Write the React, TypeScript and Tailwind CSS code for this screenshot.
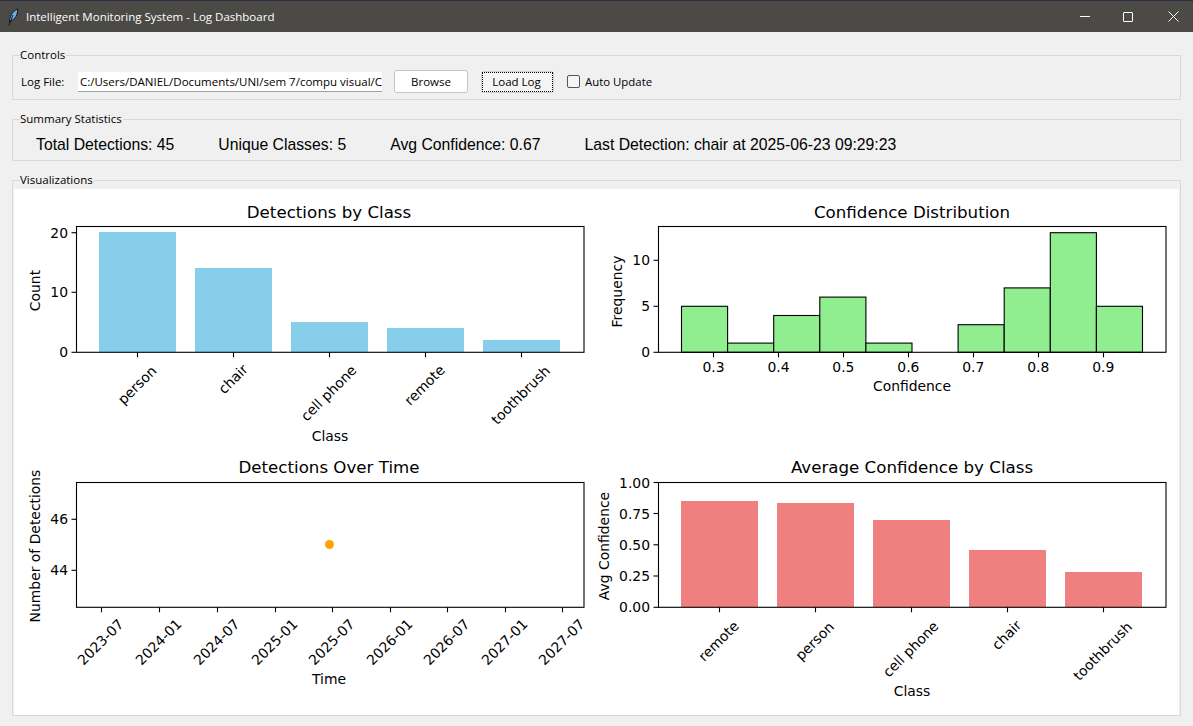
import type { ReactNode } from "react"

const axis = "#000000"
const dv = { fontFamily: '"DejaVu Sans", sans-serif' }

function GroupBox({ label, className, children }: { label: string; className: string; children: ReactNode }) {
  return (
    <div className={`relative border border-[#d9d9d9] ${className}`}>
      <span className="absolute -top-[9px] left-[7px] bg-[#f0f0f0] pr-[1px] text-[11.5px] leading-[16px] text-black">{label}</span>
      {children}
    </div>
  )
}

function Button({ children, focused }: { children: ReactNode; focused?: boolean }) {
  return (
    <button className={`flex items-center justify-center rounded-[3px] border text-[11.5px] text-black ${focused ? "h-[22px] w-[73px] border-[#d0d0d0] bg-[#f5f5f5]" : "h-[23px] w-[74px] border-[#c4c4c4] bg-white"}`}>
      <span className={focused ? "flex h-[20px] w-[71px] items-center justify-center border border-dotted border-black pr-[2px]" : ""}>{children}</span>
    </button>
  )
}

type Bar = { x: number; top: number }

function Axes({ x0, x1, y0, y1 }: { x0: number; x1: number; y0: number; y1: number }) {
  return <rect x={x0} y={y0} width={x1 - x0} height={y1 - y0} fill="none" stroke={axis} strokeWidth="1.1" />
}

function YTicks({ x, ticks }: { x: number; ticks: [string, number][] }) {
  return (
    <>
      {ticks.map(([label, y]) => (
        <g key={label}>
          <line x1={x - 5} x2={x} y1={y} y2={y} stroke={axis} strokeWidth="1.1" />
          <text x={x - 8.5} y={y} textAnchor="end" dominantBaseline="central" fontSize="13.9" fill="#000">{label}</text>
        </g>
      ))}
    </>
  )
}

function XTicks({ y, ticks }: { y: number; ticks: number[] }) {
  return (
    <>
      {ticks.map((x) => (
        <line key={x} x1={x} x2={x} y1={y} y2={y + 5} stroke={axis} strokeWidth="1.1" />
      ))}
    </>
  )
}

function Rotated({ x, y, label }: { x: number; y: number; label: string }) {
  return (
    <text x={x} y={y} textAnchor="middle" dominantBaseline="central" fontSize="13.9" fill="#000" transform={`rotate(-45 ${x} ${y})`}>{label}</text>
  )
}

function Title({ x, y, label }: { x: number; y: number; label: string }) {
  return <text x={x} y={y} textAnchor="middle" fontSize="16.67" fill="#000">{label}</text>
}

function YLabel({ x, y, label }: { x: number; y: number; label: string }) {
  return <text x={x} y={y} textAnchor="middle" dominantBaseline="central" fontSize="13.9" fill="#000" transform={`rotate(-90 ${x} ${y})`}>{label}</text>
}

function Chart({ box, children }: { box: string; children: ReactNode }) {
  const [, , w, h] = box.split(" ")
  return (
    <svg width={w} height={h} viewBox={box} style={dv} className="block overflow-visible">
      {children}
    </svg>
  )
}

const classBars: Bar[] = [
  { x: 99, top: 232 },
  { x: 195, top: 268 },
  { x: 291, top: 322 },
  { x: 387, top: 328 },
  { x: 483, top: 340 },
]

const avgBars: Bar[] = [
  { x: 681, top: 501 },
  { x: 777, top: 503 },
  { x: 873, top: 520 },
  { x: 969, top: 550 },
  { x: 1065, top: 572 },
]

const hist = [5, 1, 4, 6, 1, 0, 3, 7, 13, 5]
const timeTicks: [string, number][] = [
  ["2023-07", 101.5],
  ["2024-01", 159.5],
  ["2024-07", 217.5],
  ["2025-01", 275.5],
  ["2025-07", 332.5],
  ["2026-01", 390.5],
  ["2026-07", 447.5],
  ["2027-01", 505.5],
  ["2027-07", 562.5],
]

export default function App() {
  return (
    <div className="flex h-[726px] w-[1193px] flex-col overflow-hidden bg-[#f0f0f0] font-['Open_Sans','Noto_Sans',sans-serif] text-black">
      {/* title bar */}
      <div className="h-[1px] bg-[#2d2d45]" />
      <div className="flex h-[31px] items-center bg-[#4b4a47] text-white">
        <svg width="12" height="18" viewBox="0 0 12 18" className="ml-[7px]">
          <path d="M2.5 14 C2.5 9 5 3.5 10.5 1 C11 6 8.5 11 4 13 Z" fill="#6fb0ea" stroke="#10131c" strokeWidth="1" />
          <path d="M2 17.5 L6 7" stroke="#10131c" strokeWidth="1" />
        </svg>
        <span className="ml-[7px] text-[11.5px]">Intelligent Monitoring System - Log Dashboard</span>
        <div className="ml-auto flex items-center">
          <span className="mr-[33px] h-[1px] w-[10px] bg-white" />
          <span className="mr-[35px] h-[10px] w-[10px] rounded-[1px] border border-white" />
          <svg width="11" height="11" viewBox="0 0 11 11" className="mr-[14px]">
            <path d="M0.5 0.5 L10.5 10.5 M10.5 0.5 L0.5 10.5" stroke="#fff" strokeWidth="1" />
          </svg>
        </div>
      </div>

      <div className="flex flex-1 flex-col px-[12px] pt-[23px]">
        <GroupBox label="Controls" className="h-[45px]">
          <div className="flex h-full items-center pl-[8px] pt-[8px]">
            <span className="w-[57px] text-[11.5px]">Log File:</span>
            <div className="h-[20px] w-[304px] overflow-hidden whitespace-nowrap border-b border-[#a0a0a0] bg-white pl-[2px] text-[11.5px] leading-[19px]">C:/Users/DANIEL/Documents/UNI/sem 7/compu visual/C</div>
            <div className="ml-[12px]"><Button>Browse</Button></div>
            <div className="ml-[13px]"><Button focused>Load Log</Button></div>
            <span className="ml-[13px] h-[13px] w-[13px] rounded-[2px] border border-[#555] bg-[#f5f5f5]" />
            <span className="ml-[5px] text-[11.4px]">Auto Update</span>
          </div>
        </GroupBox>

        <GroupBox label="Summary Statistics" className="mt-[19px] h-[42px]">
          <div className="flex h-full items-center pl-[23px] pt-[10px] font-['Liberation_Sans',sans-serif] text-[15.75px]">
            <span>Total Detections: 45</span>
            <span className="ml-[44px]">Unique Classes: 5</span>
            <span className="ml-[44px]">Avg Confidence: 0.67</span>
            <span className="ml-[44px]">Last Detection: chair at 2025-06-23 09:29:23</span>
          </div>
        </GroupBox>

        <GroupBox label="Visualizations" className="mt-[19px] h-[536px] p-[1px] pt-[8px]">
          <div className="grid h-[526px] grid-cols-[583px_583px] grid-rows-[263px_263px] bg-white">
            <Chart box="14 189 583 263">
              <Title x={329} y={218} label="Detections by Class" />
              {classBars.map((b) => (
                <rect key={b.x} x={b.x} y={b.top} width={77} height={352 - b.top} fill="#87ceeb" />
              ))}
              <Axes x0={76.5} x1={584} y0={226.5} y1={352.3} />
              <YTicks x={76.5} ticks={[["20", 232.7], ["10", 292.3], ["0", 352.3]]} />
              <XTicks y={352.3} ticks={[137.5, 233.5, 329.5, 425.5, 521.5]} />
              <Rotated x={137} y={385} label="person" />
              <Rotated x={233} y={379} label="chair" />
              <Rotated x={328.5} y={393} label="cell phone" />
              <Rotated x={424.5} y={385} label="remote" />
              <Rotated x={520.5} y={395} label="toothbrush" />
              <text x={330} y={441} textAnchor="middle" fontSize="13.9" fill="#000">Class</text>
              <YLabel x={35} y={290.5} label="Count" />
            </Chart>

            <Chart box="597 189 583 263">
              <Title x={912} y={218} label="Confidence Distribution" />
              {hist.map((n, i) =>
                n > 0 ? (
                  <rect key={i} x={681.5 + i * 46.1} y={352.3 - n * 9.2} width={46.1} height={n * 9.2} fill="#90ee90" stroke="#000" strokeWidth="1.1" />
                ) : null,
              )}
              <Axes x0={658.5} x1={1166} y0={226.5} y1={352.3} />
              <YTicks x={658.5} ticks={[["10", 260.3], ["5", 306.3], ["0", 352.3]]} />
              <XTicks y={352.3} ticks={[713.5, 778.5, 843.5, 908.5, 973.5, 1038.5, 1103.5]} />
              {["0.3", "0.4", "0.5", "0.6", "0.7", "0.8", "0.9"].map((t, i) => (
                <text key={t} x={713.5 + i * 64.95} y={372} textAnchor="middle" fontSize="13.9" fill="#000">{t}</text>
              ))}
              <text x={912} y={391} textAnchor="middle" fontSize="13.9" fill="#000">Confidence</text>
              <YLabel x={617} y={291.5} label="Frequency" />
            </Chart>

            <Chart box="14 452 583 263">
              <Title x={329} y={473} label="Detections Over Time" />
              <Axes x0={76.5} x1={584} y0={482.5} y1={607.3} />
              <YTicks x={76.5} ticks={[["46", 519.3], ["44", 570.3]]} />
              <XTicks y={607.3} ticks={timeTicks.map(([, x]) => x)} />
              {timeTicks.map(([label, x]) => (
                <Rotated key={label} x={x - 1} y={642} label={label} />
              ))}
              <circle cx={329.5} cy={544.5} r={4.5} fill="#ffa500" />
              <text x={329} y={684} textAnchor="middle" fontSize="13.9" fill="#000">Time</text>
              <YLabel x={34.5} y={546} label="Number of Detections" />
            </Chart>

            <Chart box="597 452 583 263">
              <Title x={912} y={473} label="Average Confidence by Class" />
              {avgBars.map((b) => (
                <rect key={b.x} x={b.x} y={b.top} width={77} height={607 - b.top} fill="#f08080" />
              ))}
              <Axes x0={658.5} x1={1166} y0={482.5} y1={607.3} />
              <YTicks x={658.5} ticks={[["1.00", 482.5], ["0.75", 513.5], ["0.50", 544.8], ["0.25", 576], ["0.00", 607.3]]} />
              <XTicks y={607.3} ticks={[719.5, 815.5, 911.5, 1007.5, 1103.5]} />
              <Rotated x={718.5} y={641} label="remote" />
              <Rotated x={814.5} y={641} label="person" />
              <Rotated x={910.5} y={649} label="cell phone" />
              <Rotated x={1006.5} y={635} label="chair" />
              <Rotated x={1102.5} y={651} label="toothbrush" />
              <text x={912} y={696} textAnchor="middle" fontSize="13.9" fill="#000">Class</text>
              <YLabel x={603.5} y={546} label="Avg Confidence" />
            </Chart>
          </div>
        </GroupBox>
      </div>
    </div>
  )
}
